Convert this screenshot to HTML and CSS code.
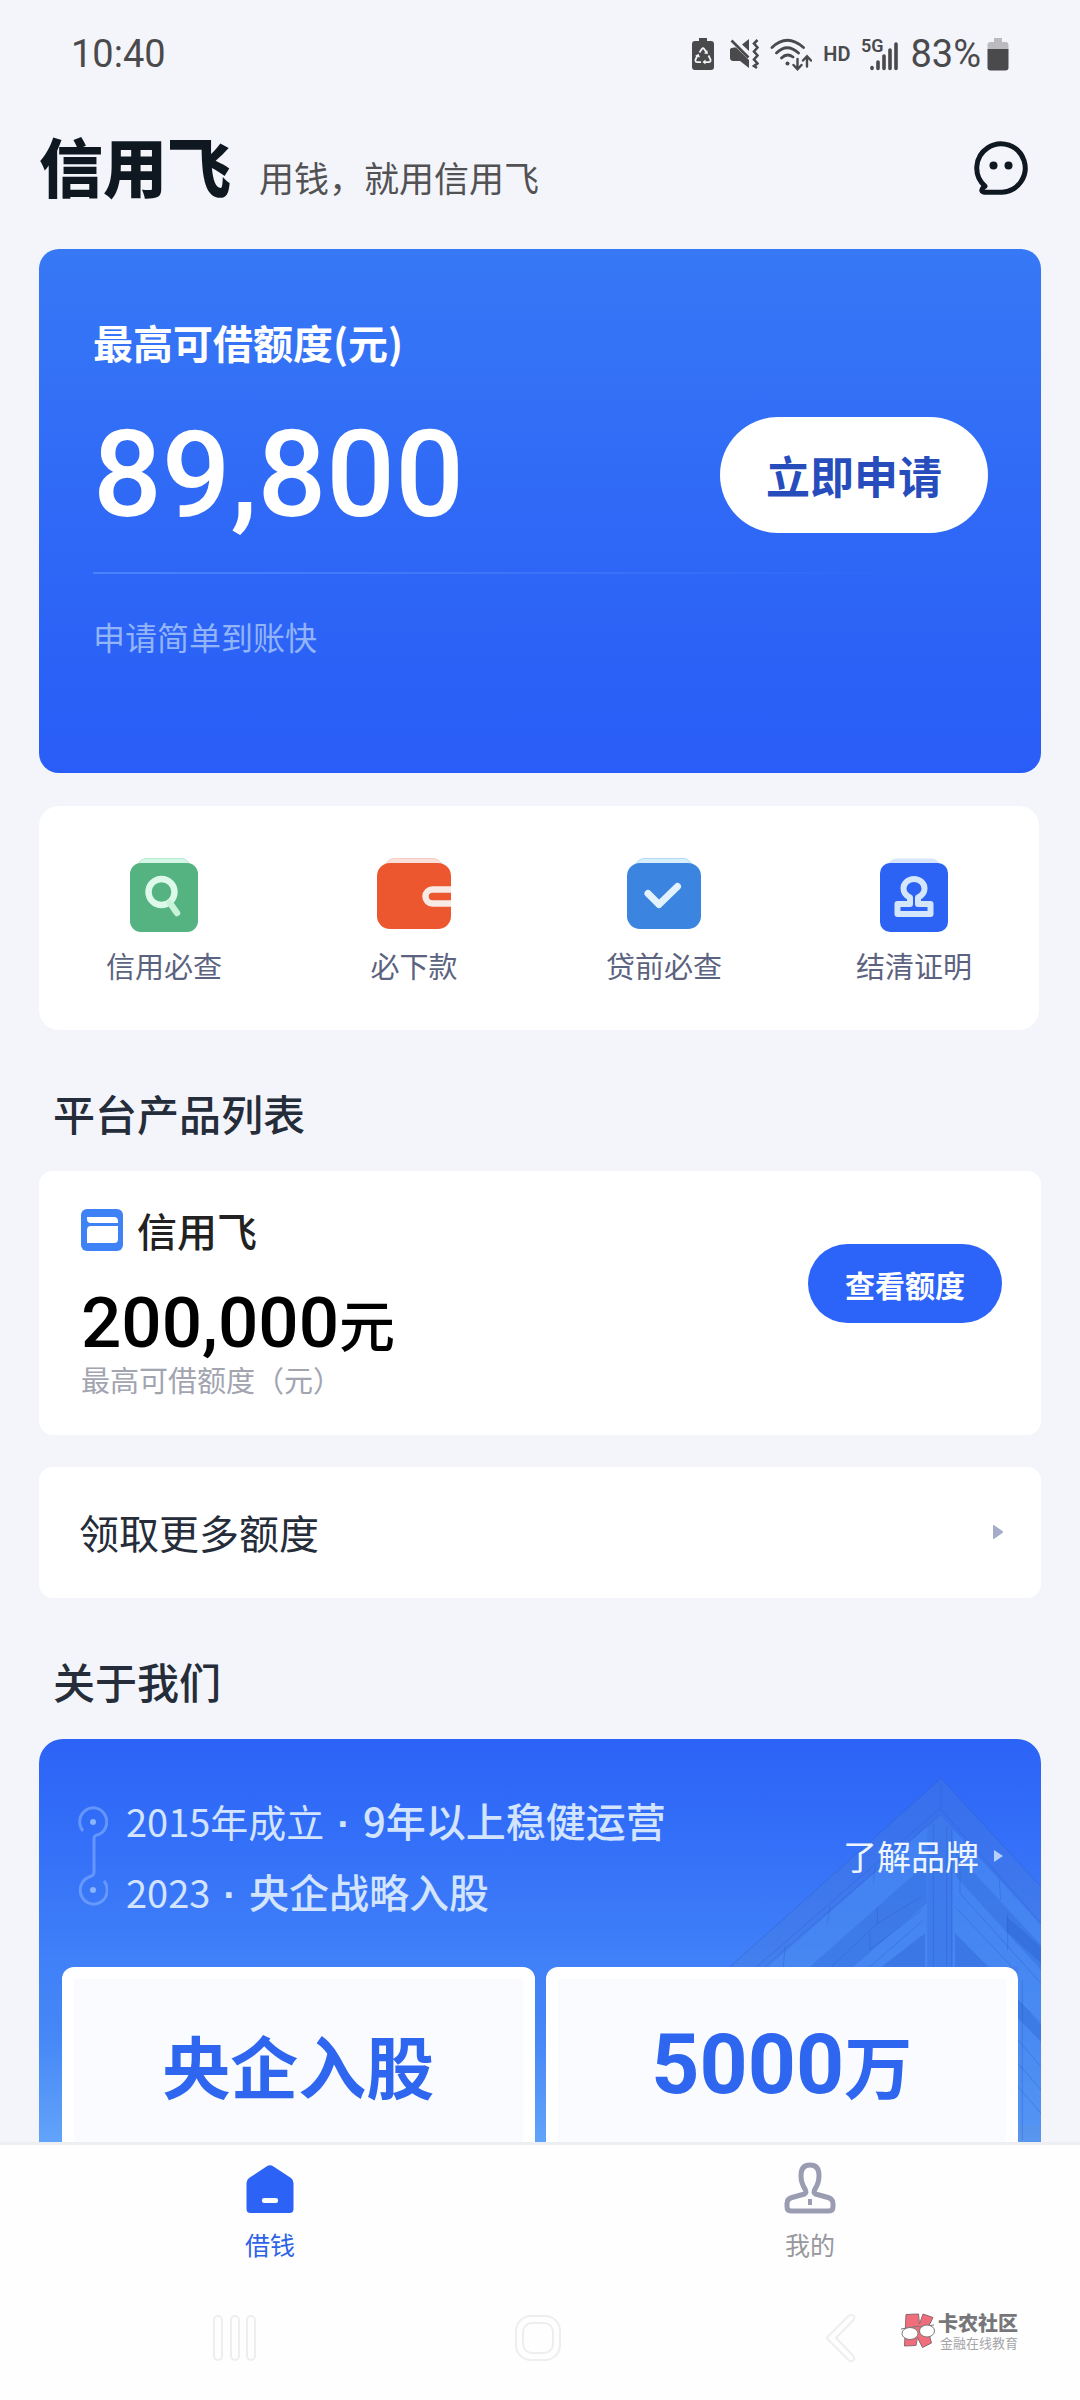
FILE: index.html
```html
<!DOCTYPE html>
<html lang="zh-CN">
<head>
<meta charset="utf-8">
<meta name="viewport" content="width=device-width, initial-scale=1">
<title>信用飞</title>
<link rel="stylesheet" href="styles.css">
</head>
<body>
<div class="app">
  <div class="status">
    <time class="clock">10:40</time>
    <div class="indicators">
      <svg width="22" height="33" viewBox="0 0 22 33" aria-hidden="true">
        <path d="M7 0h8v3h4a3 3 0 0 1 3 3v23a3 3 0 0 1-3 3H3a3 3 0 0 1-3-3V6a3 3 0 0 1 3-3h4z" fill="#4a4a4c"/>
        <path d="M7.500 14.500 9.800 11q1.200-1.500 2.400 0l2.300 3.500M16.500 17.500l2 4q.6 2.500-2 2.700h-4M9 24.200H5.500q-2.600-.2-2-2.700l2-4" fill="none" stroke="#f4f5fa" stroke-width="1.800"/>
        <path d="m12 15.500 4 .5-.8-4zM13.500 21.500v5l-3-2.500zM3 18l3.500-2.200L8 19.500z" fill="#f4f5fa"/>
      </svg>
      <svg class="mute" width="30" height="32" viewBox="0 0 30 32" aria-hidden="true">
        <path d="M13 6.500 20 1v12zM1 11q1-1.500 4-1.500h2L20 22v8l-9-7H4q-3-.5-3-3z" fill="#4a4a4c"/>
        <path d="m2.500 2.500 17 17" stroke="#4a4a4c" stroke-width="2.600"/>
        <path d="M28.500 2 25 5.500l3.500 4-3.500 4 3.500 4-3.500 4 3.500 4L25 28l3 2" fill="none" stroke="#4a4a4c" stroke-width="2.600"/>
      </svg>
      <svg width="42" height="33" viewBox="0 0 42 33" fill="none" stroke="#4a4a4c" stroke-width="2.800" stroke-linecap="round" aria-hidden="true">
        <path d="M2 9.500Q17-5 33.500 9.500M6.500 15Q17 4.500 28.500 15M11.500 20Q17 14.500 23 19"/>
        <circle cx="17.500" cy="25.500" r="2" fill="#4a4a4c" stroke="none"/>
        <path d="M27.500 21v10m-4-4 4 4.300 4-4.300M37 28.500v-10m-4 4 4-4.300 4 4.300" stroke-width="2.400"/>
      </svg>
      <span class="hd">HD</span>
      <svg class="signal" width="38" height="34" viewBox="0 0 38 34" aria-hidden="true">
        <text class="net" x="0" y="15">5G</text>
        <path d="M11 30.500v1M17 25v6.500M23 19v12.500M29 13v18.500M35 7v24.500" stroke="#4a4a4c" stroke-width="3.600" stroke-linecap="round"/>
      </svg>
      <span class="percent">83%</span>
      <svg class="cell" width="22" height="33" viewBox="0 0 22 33" aria-hidden="true">
        <path d="M7 0h8v4h3.500A3 3 0 0 1 21.500 7v4H.5V7a3 3 0 0 1 3-3H7z" fill="#bbbbbf"/>
        <path d="M.5 11h21v18.500a3 3 0 0 1-3 3h-15a3 3 0 0 1-3-3z" fill="#4a4a4c"/>
      </svg>
    </div>
  </div>

  <main class="content">
    <header class="brand">
      <h1 class="logo">信用飞</h1>
      <p class="tagline">用钱，就用信用飞</p>
      <button class="chat" type="button" aria-label="客服">
        <svg width="54" height="54" viewBox="0 0 54 54" aria-hidden="true">
          <path d="M11 45.200A24.200 24.200 0 1 1 28 51.200H10.500q-4.500-.8-1.500-4.500z" fill="none" stroke="#0f1720" stroke-width="5" stroke-linejoin="round"/>
          <circle cx="19.500" cy="24.500" r="4" fill="#0f1720"/><circle cx="34.500" cy="24.500" r="4" fill="#0f1720"/>
        </svg>
      </button>
    </header>

    <section class="hero">
      <h2 class="hero-title">最高可借额度(元)</h2>
      <div class="hero-row">
        <strong class="hero-amount">89,800</strong>
        <button class="apply" type="button">立即申请</button>
      </div>
      <hr class="rule">
      <p class="hero-note">申请简单到账快</p>
    </section>

    <nav class="services" aria-label="服务">
      <a href="#credit" class="service">
        <svg width="80" height="76" viewBox="0 0 80 76" aria-hidden="true">
          <path d="M12 8q5-7.500 10-7.500h36q5 0 9 7.500z" fill="#d5f7e8" stroke="#b9e8d0"/>
          <rect x="6" y="5" width="68" height="69" rx="11" fill="#55b382"/>
          <circle cx="37.500" cy="34" r="13" fill="none" stroke="#dcf9ea" stroke-width="6.400"/>
          <path d="m46 45 7 10" stroke="#c8f3da" stroke-width="6.400" stroke-linecap="round"/>
        </svg>
        <span>信用必查</span>
      </a>
      <a href="#loan" class="service">
        <svg width="80" height="76" viewBox="0 0 80 76" aria-hidden="true">
          <path d="M10 8q5-7.500 10-7.500h40q5 0 9 7.500z" fill="#fbe0da" stroke="#f3cdc5"/>
          <rect x="3" y="5" width="74" height="66" rx="13" fill="#ec572f"/>
          <path d="M77 31.500H58.500a7 7 0 0 0 0 14H77" fill="none" stroke="#f8ebe6" stroke-width="6.500"/>
        </svg>
        <span>必下款</span>
      </a>
      <a href="#precheck" class="service">
        <svg width="80" height="76" viewBox="0 0 80 76" aria-hidden="true">
          <path d="M10 8q5-7.500 10-7.500h40q5 0 9 7.500z" fill="#d6effb" stroke="#b5d8f5"/>
          <rect x="3" y="5" width="74" height="66" rx="13" fill="#3b85e1"/>
          <path d="m24 35.500 11 11 18.500-18" fill="none" stroke="#e2f2fe" stroke-width="7" stroke-linecap="round" stroke-linejoin="round"/>
        </svg>
        <span>贷前必查</span>
      </a>
      <a href="#proof" class="service">
        <svg width="80" height="76" viewBox="0 0 80 76" aria-hidden="true">
          <path d="M12 8q5-7.500 10-7.500h36q5 0 9 7.500z" fill="#d9e5fb"/>
          <rect x="6" y="5" width="68" height="69" rx="10" fill="#2c63f5"/>
          <path d="M36 46v-6.500q-6.500-3-6.500-9a10.500 9.500 0 0 1 21 0q0 6-6.500 9V46h12.500v10h-33V46z" fill="none" stroke="#d3e6fb" stroke-width="6" stroke-linejoin="round"/>
        </svg>
        <span>结清证明</span>
      </a>
    </nav>

    <h2 class="section-title">平台产品列表</h2>
    <article class="product">
      <div class="product-info">
        <h3 class="product-name">
          <svg width="42" height="42" viewBox="0 0 42 42" aria-hidden="true">
            <rect width="42" height="42" rx="6" fill="#3f82f6"/>
            <path d="M6 8h27q4 0 4 4v2H10q-4 0-4-4zM10 17h27v13.500q0 3.500-4 3.500H6V21q0-4 4-4z" fill="#fff"/>
          </svg>
          信用飞
        </h3>
        <p class="product-amount">200,000<span class="unit">元</span></p>
        <p class="product-note">最高可借额度（元）</p>
      </div>
      <button class="view" type="button">查看额度</button>
    </article>

    <a href="#more" class="more">
      <span>领取更多额度</span>
      <svg width="10" height="14" viewBox="0 0 10 14" aria-hidden="true"><path d="M0 1q0-1.500 1.500-.6L9.500 6q1 1 0 2L1.500 13.600Q0 14.500 0 13z" fill="#a5acca"/></svg>
    </a>

    <h2 class="section-title">关于我们</h2>
    <section class="about">
      <svg class="tower" width="320" height="367" viewBox="0 0 320 367" aria-hidden="true">
        <g transform="translate(-81 -55) scale(.333333)">
          <path d="M903 175 1203 500v800H250V757z" fill="#4b7bd8" opacity=".32"/>
          <path d="M900 285 1203 615v600h-70V740H385z" fill="#4d94fb" opacity=".42"/>
          <path d="m860 430-350 310h130l220-190zM948 400l255 275v75L948 470z" fill="#2b62cf" opacity=".3"/>
          <path d="m855 640-130 100h130zM945 640l100 100h-100zM1100 590l103 90v50l-103-95zM1134 840l69 75v50l-69-70z" fill="#2b62cf" opacity=".38"/>
          <path d="M862 300l38-15 38 40v415h-76z" fill="#3a74e6" opacity=".6"/>
          <path d="m903 175-633 565M903 175l300 325M900 265 350 740M900 265l303 345M900 285 375 740M705 440l-5 50M570 560l-8 50M712 560v50l133-80M712 610 575 740M845 570 690 690v-50M435 680l-5 60M850 600 690 740M960 400v120l243 270M945 560l170 180M1078 480l4 60M1103 580v110M903 190v70M880 310v430M920 320v420M935 330v410M1147 780v480M1134 840l69 70M1134 960l69 80M1134 1030l69 80M1134 1100l69 80" fill="none" stroke="#285bc8" stroke-width="3" opacity=".35"/>
        </g>
      </svg>
      <div class="about-head">
        <svg class="timeline" width="30" height="100" viewBox="0 0 30 100" aria-hidden="true">
          <g fill="none" stroke="#79a6ff" stroke-width="3">
            <path d="M5 25A13.500 14 0 1 1 21 28.500q-5 .5-5 4v34q0 3-5 4.500A13.500 14 0 1 0 26 75" opacity=".7"/>
          </g>
          <circle cx="15" cy="16" r="3" fill="#8ab4ff"/><circle cx="15" cy="84" r="3" fill="#8ab4ff"/>
        </svg>
        <ul class="history">
          <li>2015年成立<span class="dot">·</span><b>9年以上稳健运营</b></li>
          <li>2023<span class="dot">·</span><b>央企战略入股</b></li>
        </ul>
        <a href="#brand" class="brand-link">了解品牌
          <svg width="10" height="14" viewBox="0 0 10 14" aria-hidden="true"><path d="M0 1 9 7 0 13z" fill="#b5d0fc"/></svg>
        </a>
      </div>
      <div class="facts">
        <div class="fact">央企入股</div>
        <div class="fact"><span class="fact-number">5000</span>万</div>
      </div>
    </section>
  </main>

  <footer class="dock">
    <nav class="tabs" aria-label="主导航">
      <a href="#borrow" class="tab tab-active">
        <svg width="52" height="52" viewBox="0 0 52 52" aria-hidden="true">
          <path d="M22.500 4.500q3.500-2.500 7 0L47 16q2.500 2 2.500 5v26q0 4-4 4H6.500q-4 0-4-4V21q0-3 2.500-5z" fill="#2c63f6"/>
          <rect x="18" y="36" width="16" height="5" rx="2" fill="#fff"/>
        </svg>
        <span>借钱</span>
      </a>
      <a href="#mine" class="tab">
        <svg width="52" height="52" viewBox="0 0 52 52" fill="none" stroke="#9a9db2" stroke-width="5" stroke-linejoin="round" aria-hidden="true">
          <path d="M20.500 32q2.500-1.500.5-5-4-6-4-13.500Q17 3 26 3t9 10.500q0 7.500-4 13.500-2 3.500.5 5L44 35.500q5 1.500 5 6v3q0 4.500-4 4.500H7q-4 0-4-4.500v-3q0-4.500 5-6z"/>
          <path d="M26 37v6" stroke-width="4"/>
        </svg>
        <span>我的</span>
      </a>
    </nav>
    <div class="system-nav">
      <button type="button" aria-label="最近任务">
        <svg width="46" height="48" viewBox="0 0 46 48" fill="none" stroke="#eeeeee" stroke-width="2" aria-hidden="true"><rect x="2" y="2" width="8" height="44" rx="4"/><rect x="19" y="2" width="8" height="44" rx="4"/><rect x="35" y="2" width="8" height="44" rx="4"/></svg>
      </button>
      <button type="button" aria-label="主屏幕">
        <svg width="48" height="48" viewBox="0 0 48 48" fill="none" stroke="#eeeeee" stroke-width="2" aria-hidden="true"><rect x="2" y="2" width="44" height="44" rx="15"/><rect x="9" y="9" width="30" height="30" rx="9"/></svg>
      </button>
      <button type="button" aria-label="返回">
        <svg width="32" height="50" viewBox="0 0 32 50" fill="none" stroke="#eeeeee" stroke-width="2" stroke-linejoin="round" aria-hidden="true"><path d="M1.500 25 24 2.500q4-2 5.500 1.500 0 2-1 3L11 25l17.500 18q2 4-1.500 5-2 .5-3-.5z"/></svg>
      </button>
    </div>
    <div class="watermark">
      <svg width="36" height="36" viewBox="0 0 36 36" aria-hidden="true">
        <path d="M6 1.500 18.500 1l1 10 3.500-10 10 3.500-5.500 11 4 14.500-9 4.500-5-10-1.500 8-11.500.5z" fill="#f06e7c" stroke="#8a6a70"/>
        <path d="m1 16 18-3M19 14l15-2" stroke="#777"/>
        <ellipse cx="10" cy="20.500" rx="8" ry="6" fill="#fff" stroke="#777"/><ellipse cx="27" cy="18" rx="7.500" ry="6" fill="#fff" stroke="#777"/>
      </svg>
      <div class="watermark-text"><b>卡农社区</b><span>金融在线教育</span></div>
    </div>
  </footer>
</div>
</body>
</html>
```
FILE: styles.css
```css
* { box-sizing: border-box; }

body {
  margin: 0;
  background: #f4f5fa;
  color: #262d3a;
  font-family: "Noto Sans CJK SC", "Noto Sans", sans-serif;
}

h1, h2, h3, p, ul { margin: 0; padding: 0; }
ul { list-style: none; }
a { color: inherit; text-decoration: none; }
button { border: 0; padding: 0; background: none; font-family: inherit; cursor: pointer; }
svg { display: block; flex: none; }

.app {
  display: flex;
  flex-direction: column;
  height: 100vh;
}

/* Status bar */
.status {
  flex: none;
  display: flex;
  align-items: center;
  justify-content: space-between;
  height: 108px;
  padding: 0 71px;
  color: #4a4a4c;
  font-family: Roboto, sans-serif;
}
.clock, .percent { font-size: 38px; line-height: 48px; }
.indicators { display: flex; align-items: center; gap: 11px; }
.mute { margin-left: 4px; }
.hd { font-size: 20px; font-weight: 600; line-height: 24px; }
.signal { overflow: visible; }
.net { font-size: 18px; font-weight: 600; fill: #4a4a4c; }
.cell { margin-left: -5px; }

/* Scrolling page */
.content {
  flex: 1;
  min-height: 0;
  overflow-y: auto;
  scrollbar-width: none;
  padding: 0 39px;
}

.brand {
  display: flex;
  align-items: baseline;
  height: 141px;
  padding: 12px 13px 0 0;
}
.logo { color: #0f1720; font-size: 64px; font-weight: 900; line-height: 88px; }
.tagline { margin-left: 28px; color: #525254; font-size: 35px; line-height: 48px; }
.chat { align-self: flex-start; margin: 21px 0 0 auto; }

.hero {
  padding: 65px 53px 113px 54px;
  border-radius: 20px;
  background: linear-gradient(#3778f6, #2f69f6 50%, #295df7);
  color: #fff;
}
.hero-title { font-size: 40px; font-weight: 700; line-height: 56px; }
.hero-row {
  display: flex;
  align-items: center;
  justify-content: space-between;
  margin-top: 47px;
}
.hero-amount { font-family: Roboto, sans-serif; font-size: 121px; font-weight: 500; line-height: 116px; }
.apply {
  width: 268px;
  height: 116px;
  border-radius: 58px;
  background: #fff;
  color: #274dbd;
  font-size: 44px;
  font-weight: 700;
}
.rule {
  height: 2px;
  margin: 39px 0 0;
  border: 0;
  background: linear-gradient(90deg, #4b83fb, #4b83fb00 92%);
}
.hero-note { margin-top: 38px; color: #92b4f8; font-size: 32px; line-height: 48px; }

.services {
  display: grid;
  grid-template-columns: repeat(4, 1fr);
  margin: 33px 2px 0 0;
  padding: 52px 0 43px;
  border-radius: 20px;
  background: #fff;
}
.service {
  display: flex;
  flex-direction: column;
  align-items: center;
  gap: 9px;
  color: #5c6380;
  font-size: 29px;
  line-height: 44px;
}

.section-title {
  margin: 55px 0 30px;
  padding-left: 14px;
  font-size: 42px;
  font-weight: 500;
  line-height: 56px;
}

.product {
  display: flex;
  align-items: flex-start;
  justify-content: space-between;
  padding: 31px 39px 40px 42px;
  border-radius: 14px;
  background: #fff;
}
.product-name {
  display: flex;
  align-items: center;
  gap: 14px;
  color: #222;
  font-size: 40px;
  font-weight: 500;
  line-height: 56px;
}
.product-amount {
  display: flex;
  align-items: center;
  margin-top: 25px;
  color: #000;
  font-family: Roboto, sans-serif;
  font-size: 71px;
  font-weight: 500;
  line-height: 80px;
}
.unit { font-family: "Noto Sans CJK SC", sans-serif; font-size: 56px; }
.product-note { color: #a2a4b0; font-size: 29px; line-height: 32px; }
.view {
  width: 194px;
  height: 79px;
  margin-top: 42px;
  border-radius: 40px;
  background: #2c63f9;
  color: #fff;
  font-size: 30px;
  font-weight: 700;
}

.more {
  display: flex;
  align-items: center;
  justify-content: space-between;
  margin-top: 32px;
  padding: 35px 38px 36px 40px;
  border-radius: 14px;
  background: #fff;
  font-size: 40px;
  line-height: 60px;
}

.about {
  position: relative;
  padding: 46px 23px 60px;
  border-radius: 24px 24px 0 0;
  background: linear-gradient(#2c63f7, #336ff8 100px, #4080f8 220px, #4688f6 300px, #62a3fa 403px);
  overflow: hidden;
}
.tower { position: absolute; top: 36px; right: 0; }
.about-head {
  position: relative;
  display: flex;
  align-items: center;
  padding: 0 14px 0 16px;
}
.history { margin-left: 18px; color: #d3e4fe; font-size: 38px; line-height: 71px; }
.history li { display: flex; align-items: baseline; height: 71px; }
.history b { font-size: 40px; font-weight: 500; }
.dot { padding: 0 13px; font-family: "Liberation Sans", sans-serif; font-weight: 700; }
.brand-link {
  display: flex;
  align-items: center;
  gap: 15px;
  margin-left: auto;
  color: #eef5ff;
  font-size: 34px;
  line-height: 48px;
}
.facts {
  position: relative;
  display: grid;
  grid-template-columns: 1fr 1fr;
  gap: 11px;
  margin-top: 40px;
}
.fact {
  display: flex;
  align-items: center;
  justify-content: center;
  padding: 38px 0;
  border: 12px solid #fff;
  border-radius: 12px;
  background: #fafbfe;
  color: #2e66f0;
  font-size: 68px;
  font-weight: 700;
  line-height: 96px;
}
.fact-number { font-family: Roboto, sans-serif; font-size: 84px; }

/* Bottom bars */
.dock {
  position: relative;
  flex: none;
  border-top: 3px solid #eceef1;
  background: #fefefe;
}
.tabs { display: grid; grid-template-columns: 1fr 1fr; padding-top: 17px; }
.tab {
  display: flex;
  flex-direction: column;
  align-items: center;
  gap: 10px;
  color: #98989c;
  font-size: 25px;
  line-height: 40px;
}
.tab-active { color: #2c63e6; }
.system-nav {
  display: grid;
  grid-template-columns: repeat(3, 1fr);
  place-items: center;
  height: 136px;
  padding: 12px 88px 0 84px;
}
.watermark {
  position: absolute;
  right: 62px;
  bottom: 49px;
  display: flex;
  align-items: center;
  gap: 2px;
  color: #77777b;
}
.watermark-text { display: flex; flex-direction: column; }
.watermark-text b { font-size: 20px; font-weight: 900; line-height: 24px; }
.watermark-text span { padding-left: 2px; color: #a5a5a8; font-size: 13px; line-height: 16px; }
```
